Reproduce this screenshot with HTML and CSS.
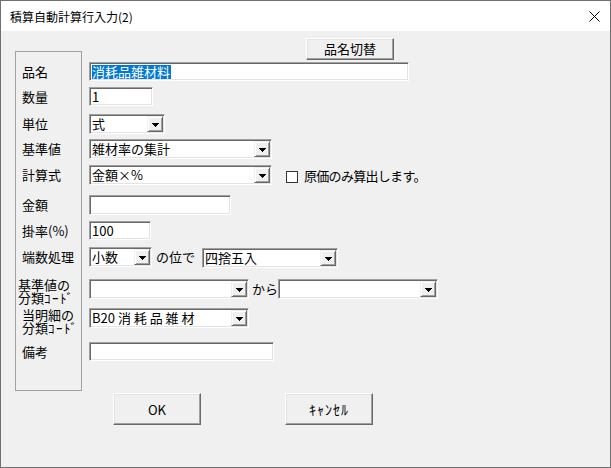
FILE: index.html
```html
<!DOCTYPE html>
<html lang="ja">
<head>
<meta charset="utf-8">
<title>積算自動計算行入力(2)</title>
<link rel="stylesheet" href="styles.css">
</head>
<body>
<div class="window">
  <div class="titlebar">
    <span class="title">積算自動計算行入力(2)</span>
    <svg class="close" width="11" height="11" viewBox="0 0 11 11"><path d="M0.5 0.5L10.5 10.5M10.5 0.5L0.5 10.5" stroke="#000" stroke-width="1"/></svg>
  </div>
  <div class="client">
    <div class="form">
      <div class="groupbox"></div>
      <div class="ctl row-switch"><button class="btn btn-switch">品名切替</button></div>

      <div class="label row-3 h19">品名</div>
      <div class="ctl row-3"><div class="field w320 h19"><span class="sel">消耗品雑材料</span></div></div>

      <div class="label row-4 h19">数量</div>
      <div class="ctl row-4"><div class="field w64 h19">1</div></div>

      <div class="label row-5 h20">単位</div>
      <div class="ctl row-5"><div class="field combo w76 h20"><span class="val">式</span><span class="drop"><svg width="7" height="4" viewBox="0 0 7 4"><path d="M0 0H7L3.5 4Z"/></svg></span></div></div>

      <div class="label row-6 h20">基準値</div>
      <div class="ctl row-6"><div class="field combo w183 h20"><span class="val">雑材率の集計</span><span class="drop"><svg width="7" height="4" viewBox="0 0 7 4"><path d="M0 0H7L3.5 4Z"/></svg></span></div></div>

      <div class="label row-7 h20">計算式</div>
      <div class="ctl row-7">
        <div class="field combo w183 h20"><span class="val">金額×%</span><span class="drop"><svg width="7" height="4" viewBox="0 0 7 4"><path d="M0 0H7L3.5 4Z"/></svg></span></div>
        <span class="check"></span>
        <span class="check-text">原価のみ算出します。</span>
      </div>

      <div class="label row-8 h20">金額</div>
      <div class="ctl row-8"><div class="field w142 h20"></div></div>

      <div class="label row-9 h19">掛率(%)</div>
      <div class="ctl row-9"><div class="field w62 h19">100</div></div>

      <div class="label row-10 h20">端数処理</div>
      <div class="ctl row-10">
        <div class="field combo w63 h20"><span class="val">小数</span><span class="drop"><svg width="7" height="4" viewBox="0 0 7 4"><path d="M0 0H7L3.5 4Z"/></svg></span></div>
        <span class="inline-text w50">の位で</span>
        <div class="field combo w136 h20 nudge"><span class="val">四捨五入</span><span class="drop"><svg width="7" height="4" viewBox="0 0 7 4"><path d="M0 0H7L3.5 4Z"/></svg></span></div>
      </div>

      <div class="label label-2 row-11 shift-left lift">基準値の<br>分類<span class="hw">ｺｰﾄﾞ</span></div>
      <div class="ctl row-11">
        <div class="field combo w160 h20"><span class="val"></span><span class="drop"><svg width="7" height="4" viewBox="0 0 7 4"><path d="M0 0H7L3.5 4Z"/></svg></span></div>
        <span class="inline-text w29">から</span>
        <div class="field combo w160 h20"><span class="val"></span><span class="drop"><svg width="7" height="4" viewBox="0 0 7 4"><path d="M0 0H7L3.5 4Z"/></svg></span></div>
      </div>

      <div class="label label-2 row-12">当明細の<br>分類<span class="hw">ｺｰﾄﾞ</span></div>
      <div class="ctl row-12"><div class="field combo w160 h20"><span class="val">B20 消 耗 品 雑 材</span><span class="drop"><svg width="7" height="4" viewBox="0 0 7 4"><path d="M0 0H7L3.5 4Z"/></svg></span></div></div>

      <div class="label row-13 h19">備考</div>
      <div class="ctl row-13"><div class="field w185 h19"></div></div>
    </div>
    <div class="actions">
      <button class="btn btn-action">OK</button>
      <button class="btn btn-action"><span class="hw hw-btn">ｷｬﾝｾﾙ</span></button>
    </div>
  </div>
</div>
</body>
</html>
```
FILE: styles.css
```css
html, body {
  margin: 0;
  padding: 0;
  background: #f0f0f0;
}

body {
  font-family: "Noto Sans CJK JP", "Noto Sans", sans-serif;
  font-size: 13px;
  color: #000;
}

.window {
  box-sizing: border-box;
  width: 611px;
  height: 468px;
  border: 1px solid #707070;
  background: #f0f0f0;
  display: flex;
  flex-direction: column;
  overflow: hidden;
}

.titlebar {
  height: 30px;
  background: #fff;
  display: flex;
  align-items: center;
  justify-content: space-between;
  padding: 0 10px 0 9px;
  flex: none;
}

.title {
  font-size: 12px;
  line-height: 30px;
  padding-top: 1px;
}

.close {
  display: block;
  margin-top: 1px;
}

.client {
  flex: 1;
  display: flex;
  flex-direction: column;
}

.form {
  display: grid;
  grid-template-columns: 67px 1fr;
  grid-template-rows: 20px 11px 25px 27px 25px 26px 30px 26px 26px 32px 29px 34px 19px 30px;
  column-gap: 7px;
  padding-left: 14px;
}

.groupbox {
  grid-column: 1;
  grid-row: 2 / 15;
  border: 1px solid #a0a0a0;
  box-sizing: border-box;
}

.label {
  grid-column: 1;
  padding-left: 7px;
  white-space: nowrap;
  align-self: start;
}

.label.h19 { line-height: 19px; }
.label.h20 { line-height: 20px; }

.label-2 {
  font-size: 13px;
  line-height: 13px;
}

.lift { margin-top: -1px; }

.hw { letter-spacing: 1.5px; }

.hw-btn { font-size: 14px; letter-spacing: 1px; }

.shift-left { padding-left: 3px; }

.ctl {
  grid-column: 2;
  display: flex;
  align-items: flex-start;
}

.row-switch { grid-row: 1 / 3; }
.row-3 { grid-row: 3; }
.row-4 { grid-row: 4; }
.row-5 { grid-row: 5; }
.row-6 { grid-row: 6; }
.row-7 { grid-row: 7; }
.row-8 { grid-row: 8; }
.row-9 { grid-row: 9; }
.row-10 { grid-row: 10; }
.row-11 { grid-row: 11; }
.row-12 { grid-row: 12; }
.row-13 { grid-row: 13; }

.field {
  box-sizing: border-box;
  background: #fff;
  border: 1px solid;
  border-color: #a0a0a0 #fff #fff #a0a0a0;
  box-shadow: inset 1px 1px 0 #696969, inset -1px -1px 0 #e3e3e3;
  padding: 0 0 0 2px;
  white-space: nowrap;
  overflow: hidden;
  display: flex;
  align-items: center;
  flex: none;
}

.field.h19 { height: 19px; line-height: 17px; }
.field.h20 { height: 20px; line-height: 18px; }

.w62 { width: 62px; }
.w63 { width: 63px; }
.w64 { width: 64px; }
.w76 { width: 76px; }
.w136 { width: 136px; }
.w142 { width: 142px; }
.w160 { width: 160px; }
.w183 { width: 183px; }
.w185 { width: 185px; }
.w320 { width: 320px; }

.sel {
  background: #0078d7;
  color: #fff;
  line-height: 14px;
  padding: 0 1px 0 0;
  margin-left: 0;
}

.combo {
  padding: 1px 1px 1px 2px;
}

.combo .val {
  flex: 1;
  overflow: hidden;
}

.drop {
  box-sizing: border-box;
  width: 16px;
  height: 16px;
  flex: none;
  background: #f0f0f0;
  border: 1px solid;
  border-color: #f0f0f0 #696969 #696969 #f0f0f0;
  box-shadow: inset 1px 1px 0 #fff, inset -1px -1px 0 #a0a0a0;
  display: flex;
  align-items: center;
  justify-content: center;
  padding-top: 1px;
}

.drop svg {
  display: block;
  shape-rendering: crispEdges;
}

.nudge { margin-top: 1px; }

.check {
  box-sizing: border-box;
  width: 12px;
  height: 12px;
  margin: 6px 0 0 14px;
  background: #fff;
  border: 1px solid #333;
  flex: none;
}

.check-text {
  margin-left: 6px;
  line-height: 22px;
  white-space: nowrap;
  letter-spacing: -0.7px;
}

.inline-text {
  line-height: 20px;
  white-space: nowrap;
  flex: none;
}

.w50 { width: 46px; margin-left: 4px; }
.w29 { width: 26px; margin-left: 3px; }

.btn {
  box-sizing: border-box;
  font-family: "Noto Sans CJK JP", "Noto Sans", sans-serif;
  font-size: 13px;
  color: #000;
  background: #f0f0f0;
  border: 1px solid;
  border-color: #fff #696969 #696969 #fff;
  box-shadow: inset -1px -1px 0 #a0a0a0, inset 1px 1px 0 #e3e3e3;
  padding: 0;
  margin: 0;
  flex: none;
}

.btn-switch {
  width: 88px;
  height: 22px;
  margin: 7px 0 0 217px;
  line-height: 18px;
}

.actions {
  display: flex;
  gap: 84px;
  padding-left: 112px;
  margin-top: 2px;
}

.btn-action {
  width: 88px;
  height: 32px;
}
```
